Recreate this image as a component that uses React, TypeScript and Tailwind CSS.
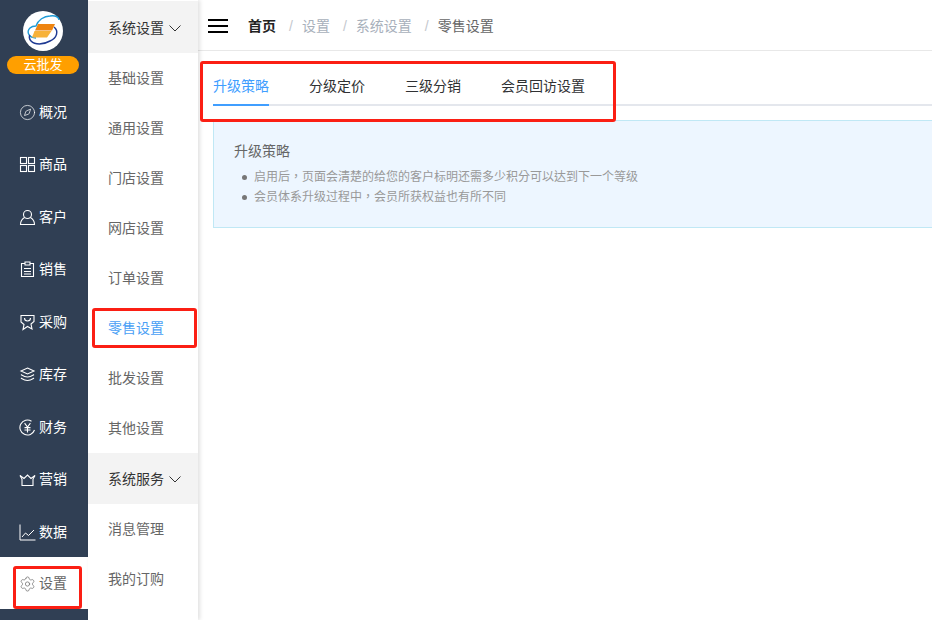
import React from "react";
import { Settings, Compass } from "lucide-react";

const font = "font-['Liberation_Sans','Noto_Sans_CJK_SC',sans-serif]";

function Ic({ children }: { children: React.ReactNode }) {
  return (
    <svg width="17" height="17" viewBox="0 0 17 17" fill="none" stroke="currentColor" strokeWidth="1.1">
      {children}
    </svg>
  );
}
function Chevron() {
  return (
    <svg width="12" height="7" viewBox="0 0 12 7" fill="none" stroke="#333333" strokeWidth="1">
      <path d="M.5.5 6 6 11.5.5" />
    </svg>
  );
}
function Logo() {
  return (
    <div className="w-10 h-10 rounded-full bg-white flex items-center justify-center">
      <svg width="34" height="34" viewBox="0 0 34 34" fill="none">
        <path d="M10 24C3 24 0 18 4 14c2-2 4-2 6-2 2-6 8-10 14-10 5-1 9 1 9 4" stroke="#1e9bd7" strokeWidth="1.4" />
        <path d="M28 13c5 4 3 11-4 14-7 4-15 4-19 0-2-2-2-5-1-6" stroke="#1f3a93" strokeWidth="1.5" />
        <path d="M12 10h17l-3 6.500H9z" fill="#ee8410" />
        <path d="M8.500 17H25.500l-4.500 6.500H6z" fill="#f7b23a" />
      </svg>
    </div>
  );
}

const nav: [React.ReactNode, string][] = [
  [<Compass size={21} strokeWidth={1} />, "概况"],
  [<Ic><rect x="1.500" y="1.500" width="6" height="6" /><rect x="9.500" y="1.500" width="6" height="6" /><rect x="1.500" y="9.500" width="6" height="6" /><rect x="9.500" y="9.500" width="6" height="6" /></Ic>, "商品"],
  [<Ic><circle cx="8.500" cy="5.500" r="4" /><path d="M5.500 8.500C3 10 1.500 12.500 1.500 15.500h14c0-3-1.500-5.500-4-7" /></Ic>, "客户"],
  [<Ic><path d="M6 2.500H2.500v13h12v-13H11" /><path d="M6 1v3h5V1zM5 7.500h7M5 10.500h7M5 13h7" /></Ic>, "销售"],
  [<Ic><path d="M2 1.500h13v6l-3 2.500 1 5-4.500-2.500L4 15.500l1-5-3-2.500z" /><path d="M5.500 4c0 4 6 4 6 0" /></Ic>, "采购"],
  [<Ic><path d="m8.500 2 6.500 3-6.500 3L2 5zM2 8.500c3 2 3.500 2.500 6.500 2.500s3.500-.5 6.500-2.500M2 12c3 2 3.500 2.500 6.500 2.500s3.500-.5 6.500-2.500" /></Ic>, "库存"],
  [<Ic><path d="M12.500 2.200A7.500 7.500 0 1 0 15.500 11" /><path d="M5.600 4.200 8.500 8l2.900-3.800M5.500 8.600h6M5.500 11h6M8.500 8v5.500" /></Ic>, "财务"],
  [<Ic><path d="M1 4.500 5 7.500 8.500 4 12 7.500l4-3" /><path d="M3 8v6.500h11V8" /><path d="M1 4.500 3 8M16 4.500 14 8" /></Ic>, "营销"],
  [<Ic><path d="M1 .5v15.500h15.500" strokeWidth="1" /><path d="m3 13 3.500-4 3 2.500 5.500-5.500" strokeWidth="1" /></Ic>, "数据"],
];

function Sub({ t, active }: { t: string; active?: boolean }) {
  return (
    <div className={`h-[50px] pl-5 flex items-center text-[14px] ${active ? "text-[#4a9ff5]" : "text-[#666666]"}`}>{t}</div>
  );
}
function Redbox({ c }: { c: string }) {
  return <div className={`absolute border-[3px] border-[#fb1f14] rounded-[3px] pointer-events-none ${c}`} />;
}
function Sep({ t }: { t: string }) {
  return (
    <>
      <span className="ml-[13px] mr-[9px] text-[#c4c8ce]">/</span>
      <span className={t === "零售设置" ? "text-[#666666]" : "text-[#a8b0bb]"}>{t}</span>
    </>
  );
}
function Li({ children }: { children: React.ReactNode }) {
  return (
    <li className="flex items-center h-[20px]">
      <span className="w-[5px] h-[5px] rounded-full bg-[#777777] mr-[7px]" />
      {children}
    </li>
  );
}

export default function App() {
  return (
    <div className={`relative w-[932px] h-[620px] overflow-hidden bg-white flex ${font}`}>
      <aside className="w-[88px] shrink-0 bg-[#303f54] flex flex-col text-white">
        <div className="h-[86px] pt-[11px] pr-[2px] flex flex-col items-center">
          <Logo />
          <div className="mt-[5px] w-[72px] h-[18px] rounded-full bg-[#ff9f00] text-[13px] leading-[18px] text-center">云批发</div>
        </div>
        <div className="flex flex-col">
          {nav.map(([icon, label]) => (
            <div key={label} className="h-[52.5px] pl-[19px] flex items-center gap-[3px] text-[14px]">
              <span className="w-[17px] h-[17px] flex items-center justify-center">{icon}</span>
              {label}
            </div>
          ))}
        </div>
        <div className="h-[52px] -mt-[2px] pt-[2px] bg-white text-[#666666] pl-[19px] flex items-center gap-[3px] text-[14px]">
          <span className="w-[17px] h-[17px] flex items-center justify-center"><Settings size={22} strokeWidth={1} /></span>
          设置
        </div>
      </aside>

      <div className="w-[110px] shrink-0 bg-white pt-[1px] shadow-[2px_0_4px_rgba(0,0,0,0.12)] z-10">
        <div className="h-[52px] pt-[2px] pl-5 flex items-center gap-[5px] text-[14px] text-[#333333] bg-[#f3f3f3]">
          系统设置
          <Chevron />
        </div>
        {["基础设置", "通用设置", "门店设置", "网店设置", "订单设置"].map((t) => <Sub key={t} t={t} />)}
        <Sub t="零售设置" active />
        <Sub t="批发设置" />
        <Sub t="其他设置" />
        <div className="h-[51px] pt-[1px] pl-5 flex items-center gap-[5px] text-[14px] text-[#333333] bg-[#f3f3f3]">
          系统服务
          <Chevron />
        </div>
        <Sub t="消息管理" />
        <Sub t="我的订购" />
      </div>

      <main className="flex-1 min-w-0 flex flex-col">
        <header className="h-[51px] shrink-0 border-b border-[#e8e8e8] flex items-center pt-[2px] pl-[10px] text-[14px]">
          <div className="w-[20px] flex flex-col gap-[4px]">
            <span className="h-[2px] bg-black" />
            <span className="h-[2px] bg-black" />
            <span className="h-[2px] bg-black" />
          </div>
          <span className="ml-[20px] font-bold text-[#222222]">首页</span>
          <Sep t="设置" />
          <Sep t="系统设置" />
          <Sep t="零售设置" />
        </header>
        <div className="pl-[15px] pt-[14px]">
          <div className="flex gap-10 border-b-2 border-[#e4e7ed] h-[41px] text-[14px] text-[#303133]">
            <div className="h-[41px] leading-[42px] border-b-2 border-[#409eff] text-[#409eff]">升级策略</div>
            <div className="leading-[42px]">分级定价</div>
            <div className="leading-[42px]">三级分销</div>
            <div className="leading-[42px]">会员回访设置</div>
          </div>
          <div className="mt-[14px] h-[108px] border border-r-0 border-[#c0e8f5] bg-[#edf6ff] pl-5 pt-[20px]">
            <div className="text-[14px] leading-[20px] text-[#666666]">升级策略</div>
            <ul lang="zh-TW" className="mt-[6px] pl-[8px] text-[12px] text-[#999999] font-['Liberation_Sans','Noto_Sans_CJK_TC',sans-serif]">
              <Li>启用后，页面会清楚的给您的客户标明还需多少积分可以达到下一个等级</Li>
              <Li>会员体系升级过程中，会员所获权益也有所不同</Li>
            </ul>
          </div>
        </div>
      </main>

      <Redbox c="left-[200px] top-[61px] w-[416px] h-[61px] z-20" />
      <Redbox c="left-[92px] top-[308px] w-[105px] h-[40px] z-20" />
      <Redbox c="left-[13px] top-[566px] w-[69px] h-[43px] z-20" />
    </div>
  );
}
